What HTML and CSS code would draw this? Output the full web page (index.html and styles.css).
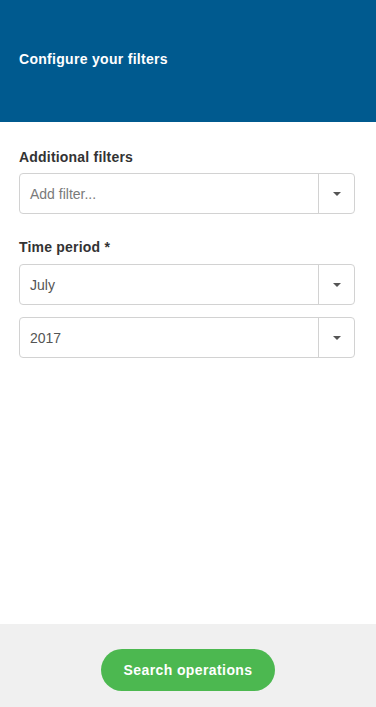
FILE: index.html
```html
<!DOCTYPE html>
<html>
<head>
<meta charset="utf-8">
<link rel="stylesheet" href="styles.css">
</head>
<body>
<div class="page">
  <header class="header">
    <h1 class="title">Configure your filters</h1>
  </header>
  <main class="content">
    <div class="group">
      <label class="label">Additional filters</label>
      <div class="select">
        <span class="value placeholder">Add filter...</span>
        <span class="arrow"><span class="caret"></span></span>
      </div>
    </div>
    <div class="group">
      <label class="label">Time period *</label>
      <div class="select">
        <span class="value">July</span>
        <span class="arrow"><span class="caret"></span></span>
      </div>
      <div class="select">
        <span class="value">2017</span>
        <span class="arrow"><span class="caret"></span></span>
      </div>
    </div>
  </main>
  <footer class="footer">
    <button class="btn">Search operations</button>
  </footer>
</div>
</body>
</html>
```

FILE: styles.css
```css
* { box-sizing: border-box; }
html, body { margin: 0; padding: 0; }
body {
  font-family: "Liberation Sans", Arial, sans-serif;
  background: #fff;
  color: #333;
}
.page {
  display: flex;
  flex-direction: column;
  height: 707px;
}
.header {
  background: #005a8f;
  height: 122px;
  display: flex;
  align-items: center;
  padding: 0 19px 4px;
}
.title {
  margin: 0;
  color: #fff;
  font-size: 14px;
  font-weight: bold;
  letter-spacing: 0.3px;
  line-height: 16px;
}
.content {
  flex: 1;
  padding: 27px 21px 0 19px;
}
.group {
  display: flex;
  flex-direction: column;
  gap: 12px;
  margin-bottom: 25px;
}
.label {
  font-size: 14px;
  font-weight: bold;
  color: #333;
  letter-spacing: 0.2px;
  line-height: 16px;
  margin-bottom: -4px;
}
.group + .group .label { margin-bottom: -3px; }
.select {
  height: 41px;
  border: 1px solid #d2d2d2;
  border-radius: 4px;
  display: flex;
  align-items: stretch;
  background: #fff;
}
.value {
  flex: 1;
  display: flex;
  align-items: center;
  padding-left: 10px;
  font-size: 14px;
  color: #555;
}
.placeholder { color: #7a7a7a; }
.arrow {
  width: 36px;
  border-left: 1px solid #d2d2d2;
  display: flex;
  align-items: center;
  justify-content: center;
}
.caret {
  width: 0;
  height: 0;
  border-left: 4px solid transparent;
  border-right: 4px solid transparent;
  border-top: 4px solid #555;
}
.footer {
  height: 83px;
  background: #f0f0f0;
  display: flex;
  align-items: flex-start;
  justify-content: center;
  padding-top: 25px;
}
.btn {
  width: 174px;
  height: 42px;
  border: none;
  border-radius: 21px;
  background: #4cb850;
  color: #fff;
  font-family: "Liberation Sans", Arial, sans-serif;
  font-size: 14px;
  font-weight: bold;
  letter-spacing: 0.4px;
  cursor: pointer;
}
```
